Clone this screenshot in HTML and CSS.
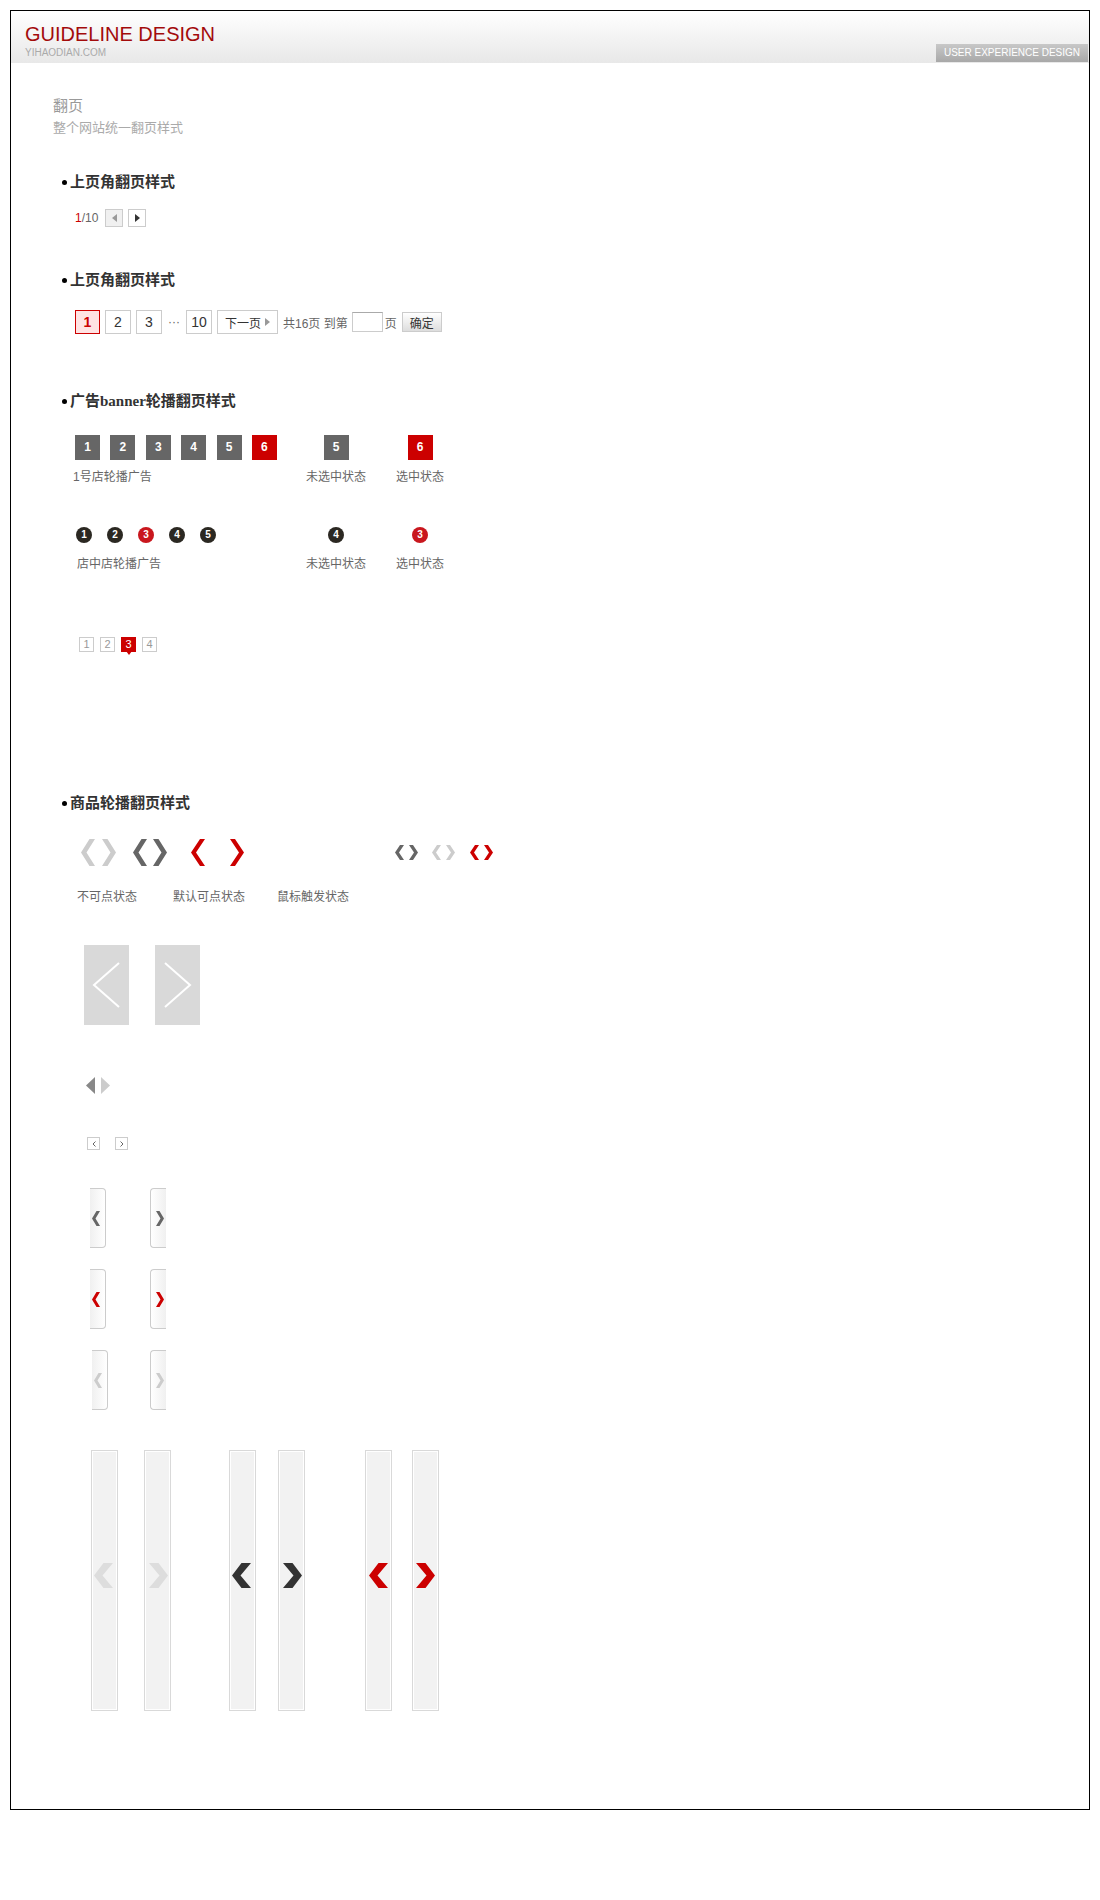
FILE: index.html
```html
<!DOCTYPE html>
<html lang="zh-CN">
<head>
    <meta charset="UTF-8">
    <title>翻页 - Guideline Design</title>
    <link rel="stylesheet" href="styles.css">
</head>
<body>
<div class="page">
    <!-- 顶部 -->
    <div class="header">
        <div class="brand">
            <div class="brand-title">GUIDELINE DESIGN</div>
            <div class="brand-sub">YIHAODIAN.COM</div>
        </div>
        <div class="badge">USER EXPERIENCE DESIGN</div>
    </div>

    <div class="content">
        <h1 class="page-title">翻页</h1>
        <p class="page-desc">整个网站统一翻页样式</p>

        <!-- 上页角翻页 -->
        <h2 class="sec-title s1">上页角翻页样式</h2>
        <div class="mini-pager">
            <span class="mp-count"><span class="cur">1</span>/10</span>
            <span class="mp-btn off"><i class="tri-l"></i></span>
            <span class="mp-btn"><i class="tri-r"></i></span>
        </div>

        <h2 class="sec-title s2">上页角翻页样式</h2>
        <div class="pager">
            <span class="pg-num active">1</span>
            <span class="pg-num">2</span>
            <span class="pg-num">3</span>
            <span class="pg-dots">···</span>
            <span class="pg-num">10</span>
            <span class="pg-next">下一页<i class="tri-r light"></i></span>
            <span class="pg-text">共16页 到第</span>
            <input class="pg-input" type="text" value="">
            <span class="pg-unit">页</span>
            <button class="pg-go">确定</button>
        </div>

        <!-- 广告banner -->
        <h2 class="sec-title s3">广告banner轮播翻页样式</h2>
        <div class="banner-row">
            <div class="banner-main">
                <div class="sq-list">
                    <span class="sq">1</span>
                    <span class="sq">2</span>
                    <span class="sq">3</span>
                    <span class="sq">4</span>
                    <span class="sq">5</span>
                    <span class="sq on">6</span>
                </div>
                <div class="b-label">1号店轮播广告</div>
            </div>
            <div class="banner-state">
                <span class="sq">5</span>
                <div class="b-label">未选中状态</div>
            </div>
            <div class="banner-state">
                <span class="sq on">6</span>
                <div class="b-label">选中状态</div>
            </div>
        </div>

        <div class="banner-row dots">
            <div class="banner-main">
                <div class="dot-list">
                    <span class="dot">1</span>
                    <span class="dot">2</span>
                    <span class="dot on">3</span>
                    <span class="dot">4</span>
                    <span class="dot">5</span>
                </div>
                <div class="b-label">店中店轮播广告</div>
            </div>
            <div class="banner-state">
                <span class="dot">4</span>
                <div class="b-label">未选中状态</div>
            </div>
            <div class="banner-state">
                <span class="dot on">3</span>
                <div class="b-label">选中状态</div>
            </div>
        </div>

        <div class="num-tabs">
            <span class="nt">1</span>
            <span class="nt">2</span>
            <span class="nt on">3</span>
            <span class="nt">4</span>
        </div>

        <!-- 商品轮播 -->
        <h2 class="sec-title s4">商品轮播翻页样式</h2>
        <div class="chev-row">
            <div class="cg g1">
                <svg class="chev-lg f-light" viewBox="0 0 14 27"><polygon points="8.5,0 14,0 5.5,13.5 14,27 8.5,27 0,13.5"/></svg>
                <svg class="chev-lg f-light" viewBox="0 0 14 27"><polygon points="0,0 5.5,0 14,13.5 5.5,27 0,27 8.5,13.5"/></svg>
            </div>
            <div class="cg g2">
                <svg class="chev-lg f-dark" viewBox="0 0 14 27"><polygon points="8.5,0 14,0 5.5,13.5 14,27 8.5,27 0,13.5"/></svg>
                <svg class="chev-lg f-dark" viewBox="0 0 14 27"><polygon points="0,0 5.5,0 14,13.5 5.5,27 0,27 8.5,13.5"/></svg>
            </div>
            <div class="cg g3">
                <svg class="chev-lg f-red" viewBox="0 0 14 27"><polygon points="9,0 14,0 5,13.5 14,27 9,27 0,13.5"/></svg>
                <svg class="chev-lg f-red" viewBox="0 0 14 27"><polygon points="0,0 5,0 14,13.5 5,27 0,27 9,13.5"/></svg>
            </div>
            <div class="cg g4">
                <svg class="chev-sm f-dark" viewBox="0 0 9 15"><polygon points="5,0 9,0 4,7.5 9,15 5,15 0,7.5"/></svg>
                <svg class="chev-sm f-dark" viewBox="0 0 9 15"><polygon points="0,0 4,0 9,7.5 4,15 0,15 5,7.5"/></svg>
            </div>
            <div class="cg g5">
                <svg class="chev-sm f-light" viewBox="0 0 9 15"><polygon points="5,0 9,0 4,7.5 9,15 5,15 0,7.5"/></svg>
                <svg class="chev-sm f-light" viewBox="0 0 9 15"><polygon points="0,0 4,0 9,7.5 4,15 0,15 5,7.5"/></svg>
            </div>
            <div class="cg g6">
                <svg class="chev-sm f-red" viewBox="0 0 9 15"><polygon points="5,0 9,0 4,7.5 9,15 5,15 0,7.5"/></svg>
                <svg class="chev-sm f-red" viewBox="0 0 9 15"><polygon points="0,0 4,0 9,7.5 4,15 0,15 5,7.5"/></svg>
            </div>
        </div>
        <div class="chev-labels">
            <span class="cl-1">不可点状态</span>
            <span class="cl-2">默认可点状态</span>
            <span>鼠标触发状态</span>
        </div>

        <div class="big-arrows">
            <span class="ba"><svg viewBox="0 0 45 80"><polyline points="35,18 10,40 35,62"/></svg></span>
            <span class="ba"><svg viewBox="0 0 45 80"><polyline points="10,18 35,40 10,62"/></svg></span>
        </div>

        <div class="tri-row">
            <svg class="tri" viewBox="0 0 9 17"><polygon fill="#888" points="9,0 9,17 0,8.5"/></svg>
            <svg class="tri" viewBox="0 0 9 17"><polygon fill="#ccc" points="0,0 9,8.5 0,17"/></svg>
        </div>

        <div class="tiny-row">
            <span class="tb"><svg viewBox="0 0 4 6"><polyline points="3.5,0.5 1,3 3.5,5.5"/></svg></span>
            <span class="tb"><svg viewBox="0 0 4 6"><polyline points="0.5,0.5 3,3 0.5,5.5"/></svg></span>
        </div>

        <div class="side-row">
            <span class="st l"><svg class="chev-tab f-dark" viewBox="0 0 8 15"><polygon points="4.5,0 8,0 3.5,7.5 8,15 4.5,15 0,7.5"/></svg></span>
            <span class="st r"><svg class="chev-tab f-dark" viewBox="0 0 8 15"><polygon points="0,0 3.5,0 8,7.5 3.5,15 0,15 4.5,7.5"/></svg></span>
        </div>
        <div class="side-row">
            <span class="st l"><svg class="chev-tab f-red" viewBox="0 0 8 15"><polygon points="4.5,0 8,0 3.5,7.5 8,15 4.5,15 0,7.5"/></svg></span>
            <span class="st r"><svg class="chev-tab f-red" viewBox="0 0 8 15"><polygon points="0,0 3.5,0 8,7.5 3.5,15 0,15 4.5,7.5"/></svg></span>
        </div>
        <div class="side-row r3">
            <span class="st l"><svg class="chev-tab f-light" viewBox="0 0 8 15"><polygon points="4.5,0 8,0 3.5,7.5 8,15 4.5,15 0,7.5"/></svg></span>
            <span class="st r"><svg class="chev-tab f-light" viewBox="0 0 8 15"><polygon points="0,0 3.5,0 8,7.5 3.5,15 0,15 4.5,7.5"/></svg></span>
        </div>

        <div class="bars">
            <div class="bar-pair p1">
                <span class="bar l"><svg class="chev-bar f-pale" viewBox="0 0 19 25"><polygon points="9.5,0 19,0 8.5,12.5 19,25 9.5,25 0,12.5"/></svg></span>
                <span class="bar r"><svg class="chev-bar f-pale" viewBox="0 0 19 25"><polygon points="0,0 9.5,0 19,12.5 9.5,25 0,25 10.5,12.5"/></svg></span>
            </div>
            <div class="bar-pair p2">
                <span class="bar l"><svg class="chev-bar f-black" viewBox="0 0 19 25"><polygon points="9.5,0 19,0 8.5,12.5 19,25 9.5,25 0,12.5"/></svg></span>
                <span class="bar r"><svg class="chev-bar f-black" viewBox="0 0 19 25"><polygon points="0,0 9.5,0 19,12.5 9.5,25 0,25 10.5,12.5"/></svg></span>
            </div>
            <div class="bar-pair p3">
                <span class="bar l"><svg class="chev-bar f-red" viewBox="0 0 19 25"><polygon points="9.5,0 19,0 8.5,12.5 19,25 9.5,25 0,12.5"/></svg></span>
                <span class="bar r"><svg class="chev-bar f-red" viewBox="0 0 19 25"><polygon points="0,0 9.5,0 19,12.5 9.5,25 0,25 10.5,12.5"/></svg></span>
            </div>
        </div>
    </div>
</div>
</body>
</html>
```

FILE: styles.css
```css
body {
    margin: 0;
    background: #fff;
    color: #333;
    font-family: "Liberation Sans", "Noto Sans CJK SC", sans-serif;
}

.page {
    margin: 10px;
    width: 1078px;
    border: 1px solid #000;
}

/* 顶部 */
.header {
    height: 52px;
    display: flex;
    justify-content: space-between;
    background: linear-gradient(#fff, #e8e8e8);
}

.brand {
    padding: 13px 0 0 14px;
}

.brand-title {
    font-size: 20px;
    line-height: 20px;
    color: #a30b0b;
}

.brand-sub {
    margin-top: 3px;
    font-size: 10px;
    line-height: 12px;
    color: #aaa;
}

.badge {
    align-self: flex-end;
    margin: 0 1px 1px 0;
    width: 152px;
    height: 18px;
    line-height: 18px;
    text-align: center;
    font-size: 10px;
    color: #fff;
    background: linear-gradient(#c8c8c8, #a8a8a8);
}

/* 内容 */
.content {
    padding: 34px 0 98px 42px;
}

.page-title {
    margin: 0;
    font-size: 15px;
    line-height: 18px;
    font-weight: normal;
    color: #999;
}

.page-desc {
    margin: 4px 0 0;
    font-size: 13px;
    line-height: 18px;
    color: #aaa;
}

.sec-title {
    display: flex;
    align-items: center;
    margin: 0;
    padding-left: 9px;
    font: bold 15px/20px "Liberation Serif", "Noto Sans CJK SC", serif;
    color: #333;
}

.sec-title::before {
    content: "";
    width: 5px;
    height: 5px;
    border-radius: 50%;
    background: #000;
    margin-right: 3px;
}

.s1 { margin-top: 35px; }
.s2 { margin-top: 43px; }
.s3 { margin-top: 57px; }
.s4 { margin-top: 141px; }

/* 上页角 */
.mini-pager {
    margin: 17px 0 0 22px;
    height: 18px;
    display: flex;
    align-items: center;
    font-size: 12px;
    color: #666;
}

.mini-pager .cur {
    color: #c00;
}

.mp-count {
    margin-right: 7px;
}

.mp-btn {
    width: 18px;
    height: 18px;
    box-sizing: border-box;
    border: 1px solid #ccc;
    margin-right: 5px;
    display: flex;
    align-items: center;
    justify-content: center;
}

.mp-btn.off {
    background: #f0f0f0;
}

.tri-l,
.tri-r {
    width: 0;
    height: 0;
    border-top: 4px solid transparent;
    border-bottom: 4px solid transparent;
}

.tri-l {
    border-right: 5px solid #999;
}

.tri-r {
    border-left: 5px solid #333;
}

.tri-r.light {
    border-left-color: #999;
}

.pager {
    margin: 20px 0 0 22px;
    height: 24px;
    display: flex;
    align-items: center;
    gap: 5px;
    font-size: 12px;
    color: #666;
}

.pg-num {
    width: 26px;
    height: 24px;
    box-sizing: border-box;
    border: 1px solid #ccc;
    display: flex;
    align-items: center;
    justify-content: center;
    font-size: 14px;
    color: #333;
}

.pg-num.active {
    width: 25px;
    border-color: #c00;
    background: #ffe3e3;
    color: #c00;
    font-weight: bold;
}

.pg-dots {
    width: 14px;
    text-align: center;
}

.pg-next {
    height: 24px;
    box-sizing: border-box;
    padding: 0 7px;
    border: 1px solid #ccc;
    display: flex;
    align-items: center;
    gap: 4px;
    color: #333;
}

.pg-input {
    width: 31px;
    height: 20px;
    box-sizing: border-box;
    margin: 0 0 0 -1px;
    padding: 0;
    border: 1px solid #ccc;
    border-top-color: #aaa;
}

.pg-unit {
    margin-left: -3px;
}

.pg-go {
    width: 40px;
    height: 20px;
    padding: 0;
    border: 1px solid #ccc;
    background: linear-gradient(#fff, #ddd);
    font: 12px "Liberation Sans", "Noto Sans CJK SC", sans-serif;
    color: #333;
}

/* 广告banner */
.banner-row {
    display: flex;
    margin: 24px 0 0 22px;
}

.banner-row.dots {
    margin-top: 42px;
}

.banner-main {
    width: 219px;
}

.banner-state {
    width: 84px;
    display: flex;
    flex-direction: column;
    align-items: center;
}

.sq-list {
    display: flex;
    gap: 10.4px;
}

.sq {
    width: 25px;
    height: 25px;
    background: #666;
    color: #fff;
    font: bold 12px/25px "Liberation Sans", sans-serif;
    text-align: center;
}

.sq.on {
    background: #c00;
}

.b-label {
    margin-top: 9px;
    font-size: 12px;
    line-height: 16px;
    color: #666;
}

.banner-main .b-label {
    margin-left: -2px;
}

.dots .b-label {
    margin-top: 13px;
}

.dots .banner-main .b-label {
    margin-left: 2px;
}

.dot-list {
    display: flex;
    gap: 15px;
    margin-left: 1px;
}

.dot {
    width: 16px;
    height: 16px;
    border-radius: 50%;
    background: #2b2822;
    color: #fff;
    font: bold 10px/16px "Liberation Sans", sans-serif;
    text-align: center;
}

.dot.on {
    background: #c9171e;
}

.num-tabs {
    margin: 65px 0 0 26px;
    display: flex;
    gap: 6px;
}

.nt {
    position: relative;
    width: 15px;
    height: 15px;
    box-sizing: border-box;
    border: 1px solid #ccc;
    font-size: 11px;
    line-height: 13px;
    text-align: center;
    color: #999;
}

.nt.on {
    background: #c00;
    border-color: #c00;
    color: #fff;
}

.nt.on::after {
    content: "";
    position: absolute;
    left: 50%;
    top: 100%;
    margin-left: -3px;
    border-left: 3px solid transparent;
    border-right: 3px solid transparent;
    border-top: 4px solid #c00;
}

/* 商品轮播 */
.chev-row {
    margin: 26px 0 0 28px;
    height: 27px;
    display: flex;
    align-items: center;
}

.cg {
    display: flex;
    align-items: center;
}

.g1 { gap: 7px; }
.g2 { gap: 6px; margin-left: 17px; }
.g3 { gap: 25px; margin-left: 24px; }
.g4 { gap: 5px; margin-left: 151px; }
.g5 { gap: 5px; margin-left: 14px; }
.g6 { gap: 5px; margin-left: 15px; }

.chev-lg {
    display: block;
    width: 14px;
    height: 27px;
}

.chev-sm {
    display: block;
    width: 9px;
    height: 15px;
}

.f-light { fill: #ccc; }
.f-dark { fill: #666; }
.f-red { fill: #c00; }
.f-pale { fill: #ddd; }
.f-black { fill: #333; }

.chev-labels {
    margin: 23px 0 0 24px;
    display: flex;
    font-size: 12px;
    line-height: 16px;
    color: #666;
}

.cl-1 { width: 96px; }
.cl-2 { width: 104px; }

.big-arrows {
    margin: 40px 0 0 31px;
    display: flex;
    gap: 26px;
}

.ba {
    width: 45px;
    height: 80px;
    background: #d9d9d9;
}

.ba svg {
    display: block;
    width: 45px;
    height: 80px;
}

.ba polyline {
    fill: none;
    stroke: #fff;
    stroke-width: 2;
}

.tri-row {
    margin: 52px 0 0 33px;
    display: flex;
    gap: 6px;
}

.tri {
    display: block;
    width: 9px;
    height: 17px;
}

.tiny-row {
    margin: 43px 0 0 34px;
    display: flex;
    gap: 15px;
}

.tb {
    width: 13px;
    height: 13px;
    box-sizing: border-box;
    border: 1px solid #ccc;
    display: flex;
    align-items: center;
    justify-content: center;
}

.tb svg {
    width: 4px;
    height: 6px;
}

.tb polyline {
    fill: none;
    stroke: #666;
    stroke-width: 1;
}

.side-row {
    margin: 21px 0 0 37px;
    display: flex;
    gap: 44px;
}

.tiny-row + .side-row {
    margin-top: 38px;
}

.side-row.r3 {
    margin-left: 39px;
    gap: 42px;
}

.st {
    width: 16px;
    height: 60px;
    box-sizing: border-box;
    border: 1px solid #ccc;
    display: flex;
    align-items: center;
}

.st.l {
    border-left: 0;
    border-radius: 0 4px 4px 0;
    padding-left: 2px;
    background: linear-gradient(to right, #f0f0f0, #fff);
}

.st.r {
    border-right: 0;
    border-radius: 4px 0 0 4px;
    padding-right: 2px;
    justify-content: flex-end;
    background: linear-gradient(to right, #fff, #f0f0f0);
}

.chev-tab {
    display: block;
    width: 8px;
    height: 15px;
}

.bars {
    margin: 40px 0 0 38px;
    display: flex;
}

.bar-pair {
    display: flex;
}

.p1 { gap: 26px; }
.p2 { gap: 22px; margin-left: 58px; }
.p3 { gap: 20px; margin-left: 60px; }

.bar {
    width: 27px;
    height: 261px;
    box-sizing: border-box;
    border: 1px solid #d9d9d9;
    box-shadow: inset 0 0 0 1px #fff;
    background: #f2f2f2;
    display: flex;
    align-items: center;
    padding-bottom: 11px;
}

.bar.l { padding-left: 2px; }
.bar.r { padding-left: 4px; }
.p3 .bar { padding-left: 3px; }

.chev-bar {
    display: block;
    width: 19px;
    height: 25px;
}
```
